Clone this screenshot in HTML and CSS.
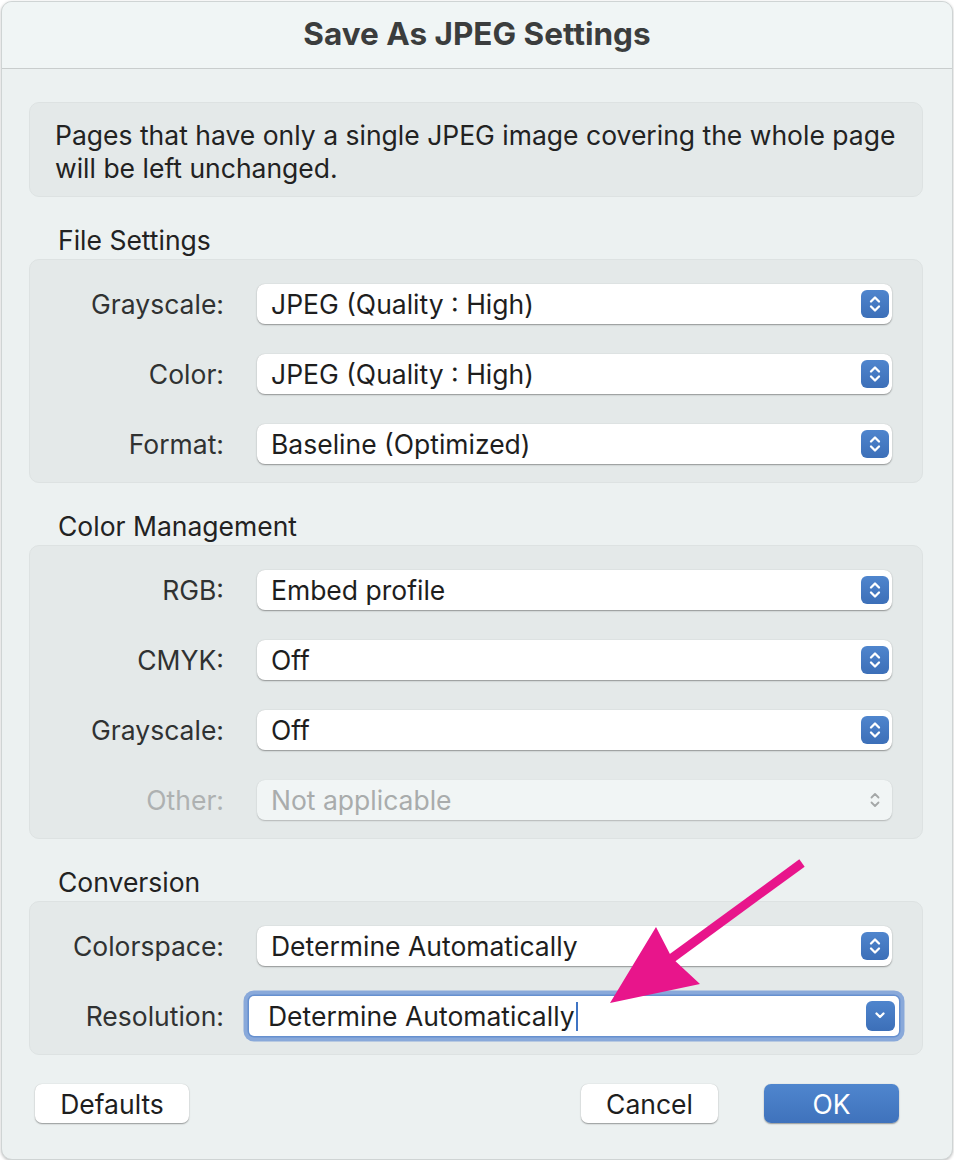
FILE: index.html
```html
<!DOCTYPE html>
<html lang="en">
<head>
    <meta charset="UTF-8">
    <title>Save As JPEG Settings</title>
    <link rel="stylesheet" href="styles.css">
</head>
<body>
    <div class="window">
        <div class="titlebar">Save As JPEG Settings</div>
        <div class="content">
            <div class="info">Pages that have only a single JPEG image covering the whole page will be left unchanged.</div>

            <div class="section-title">File Settings</div>
            <div class="group">
                <label>Grayscale:</label>
                <div class="select"><span>JPEG (Quality : High)</span><i class="stepper"><svg viewBox="0 0 28 28"><path d="M10 11.5 L14 7.5 L18 11.5 M10 16.5 L14 20.5 L18 16.5"/></svg></i></div>
                <label>Color:</label>
                <div class="select"><span>JPEG (Quality : High)</span><i class="stepper"><svg viewBox="0 0 28 28"><path d="M10 11.5 L14 7.5 L18 11.5 M10 16.5 L14 20.5 L18 16.5"/></svg></i></div>
                <label>Format:</label>
                <div class="select"><span>Baseline (Optimized)</span><i class="stepper"><svg viewBox="0 0 28 28"><path d="M10 11.5 L14 7.5 L18 11.5 M10 16.5 L14 20.5 L18 16.5"/></svg></i></div>
            </div>

            <div class="section-title">Color Management</div>
            <div class="group">
                <label>RGB:</label>
                <div class="select"><span>Embed profile</span><i class="stepper"><svg viewBox="0 0 28 28"><path d="M10 11.5 L14 7.5 L18 11.5 M10 16.5 L14 20.5 L18 16.5"/></svg></i></div>
                <label>CMYK:</label>
                <div class="select"><span>Off</span><i class="stepper"><svg viewBox="0 0 28 28"><path d="M10 11.5 L14 7.5 L18 11.5 M10 16.5 L14 20.5 L18 16.5"/></svg></i></div>
                <label>Grayscale:</label>
                <div class="select"><span>Off</span><i class="stepper"><svg viewBox="0 0 28 28"><path d="M10 11.5 L14 7.5 L18 11.5 M10 16.5 L14 20.5 L18 16.5"/></svg></i></div>
                <label class="disabled">Other:</label>
                <div class="select disabled"><span>Not applicable</span><i class="stepper"><svg viewBox="0 0 28 28"><path d="M10.5 11.5 L14 8 L17.5 11.5 M10.5 16.5 L14 20 L17.5 16.5"/></svg></i></div>
            </div>

            <div class="section-title">Conversion</div>
            <div class="group">
                <label>Colorspace:</label>
                <div class="select"><span>Determine Automatically</span><i class="stepper"><svg viewBox="0 0 28 28"><path d="M10 11.5 L14 7.5 L18 11.5 M10 16.5 L14 20.5 L18 16.5"/></svg></i></div>
                <label>Resolution:</label>
                <div class="select combo"><span>Determine Automatically</span><b class="caret"></b><i class="stepper"><svg viewBox="0 0 28 28"><path d="M10.5 12.5 L14 16 L17.5 12.5"/></svg></i></div>
            </div>

            <div class="footer">
                <button class="btn defaults">Defaults</button>
                <div class="spacer"></div>
                <button class="btn cancel">Cancel</button>
                <button class="btn primary">OK</button>
            </div>
        </div>
        <svg class="annotation" viewBox="0 0 954 1162">
            <line x1="802" y1="863" x2="668" y2="961"/>
            <polygon points="610,1003 656,927 672,958 700,984"/>
        </svg>
    </div>
</body>
</html>
```

FILE: styles.css
```css
* {
    margin: 0;
    padding: 0;
    box-sizing: border-box;
}
html, body {
    background: #ffffff;
}
body {
    font-family: Inter, "Noto Sans", sans-serif;
    color: #262626;
}

.window {
    position: relative;
    width: 952px;
    height: 1159px;
    margin: 1px 0 0 1px;
    background: #ecf1f1;
    border: 1px solid #cfd4d4;
    border-radius: 11px;
    box-shadow: 0 1px 3px rgba(0,0,0,0.25);
    overflow: hidden;
}
.titlebar {
    height: 67px;
    line-height: 64px;
    text-align: center;
    font-size: 31.5px;
    font-weight: 700;
    color: #3b3d3d;
    background: #f0f5f5;
    border-bottom: 1px solid #c9cdcd;
}
.content {
    padding: 33px 29px 0 27px;
}

.info {
    background: #e4e9e9;
    border: 1px solid #dde2e2;
    border-radius: 10px;
    padding: 16px 25px 11px 25px;
    font-size: 26.5px;
    line-height: 33px;
    color: #222222;
}

.section-title {
    font-size: 26.5px;
    line-height: 30px;
    padding: 28px 0 4px 29px;
    color: #222222;
}

.group {
    display: grid;
    grid-template-columns: 194px 1fr;
    column-gap: 33px;
    row-gap: 30px;
    align-items: center;
    background: #e4e9e9;
    border: 1px solid #dde2e2;
    border-radius: 10px;
    padding: 24px 30px 18px 0;
}
.group label {
    text-align: right;
    font-size: 26.5px;
    color: #303232;
}
.group label.disabled {
    color: #aeb1b1;
}

.select {
    height: 40px;
    display: flex;
    align-items: center;
    background: #ffffff;
    border-radius: 8px;
    box-shadow: 0 0.5px 1px rgba(0,0,0,0.18), 0 1px 2px rgba(0,0,0,0.22);
    padding: 0 3px 0 14px;
    font-size: 26.5px;
    color: #1e1e1e;
}
.select span {
    flex: 1;
}
.stepper {
    width: 28px;
    height: 28px;
    border-radius: 6px;
    background: linear-gradient(#4f85cd, #3c6fb8);
    display: flex;
}
.stepper svg {
    width: 28px;
    height: 28px;
}
.stepper path {
    fill: none;
    stroke: #ffffff;
    stroke-width: 2.3;
    stroke-linecap: round;
    stroke-linejoin: round;
}

.select.disabled {
    background: #f1f5f5;
    color: #a9acac;
    box-shadow: 0 0.5px 1px rgba(0,0,0,0.1), 0 1px 2px rgba(0,0,0,0.12);
}
.select.disabled .stepper {
    background: none;
}
.select.disabled .stepper path {
    stroke: #a4a7a7;
    stroke-width: 1.8;
}

.select.combo {
    margin: 0 -7px 0 -8px;
    padding: 0 4px 0 19px;
    border-radius: 5px;
    box-shadow: 0 0 0 1.5px #6690cf, 0 0 0 5.5px #89a9da;
}
.select.combo span {
    flex: none;
}
.caret {
    width: 2.5px;
    height: 29px;
    margin-left: 1px;
    background: #3f74c4;
    flex: none;
}
.select.combo .caret {
    margin-right: auto;
}
.select.combo .stepper {
    height: 30px;
    width: 29px;
}

.footer {
    display: flex;
    gap: 46px;
    align-items: center;
    padding: 29px 24px 0 6px;
}
.spacer {
    flex: 1;
}
.btn {
    height: 39px;
    font-family: Inter, "Noto Sans", sans-serif;
    font-size: 26.5px;
    color: #1e1e1e;
    background: #ffffff;
    border: none;
    border-radius: 7px;
    box-shadow: 0 0.5px 1px rgba(0,0,0,0.2), 0 1px 2px rgba(0,0,0,0.2);
}
.btn.defaults {
    width: 154px;
}
.btn.cancel {
    width: 137px;
}
.btn.primary {
    width: 135px;
    color: #ffffff;
    background: linear-gradient(#4f86ce, #3f72bc);
}

.annotation {
    position: absolute;
    left: -2px;
    top: -2px;
    width: 954px;
    height: 1162px;
    pointer-events: none;
}
.annotation line {
    stroke: #e8158b;
    stroke-width: 9;
}
.annotation polygon {
    fill: #e8158b;
}
```
